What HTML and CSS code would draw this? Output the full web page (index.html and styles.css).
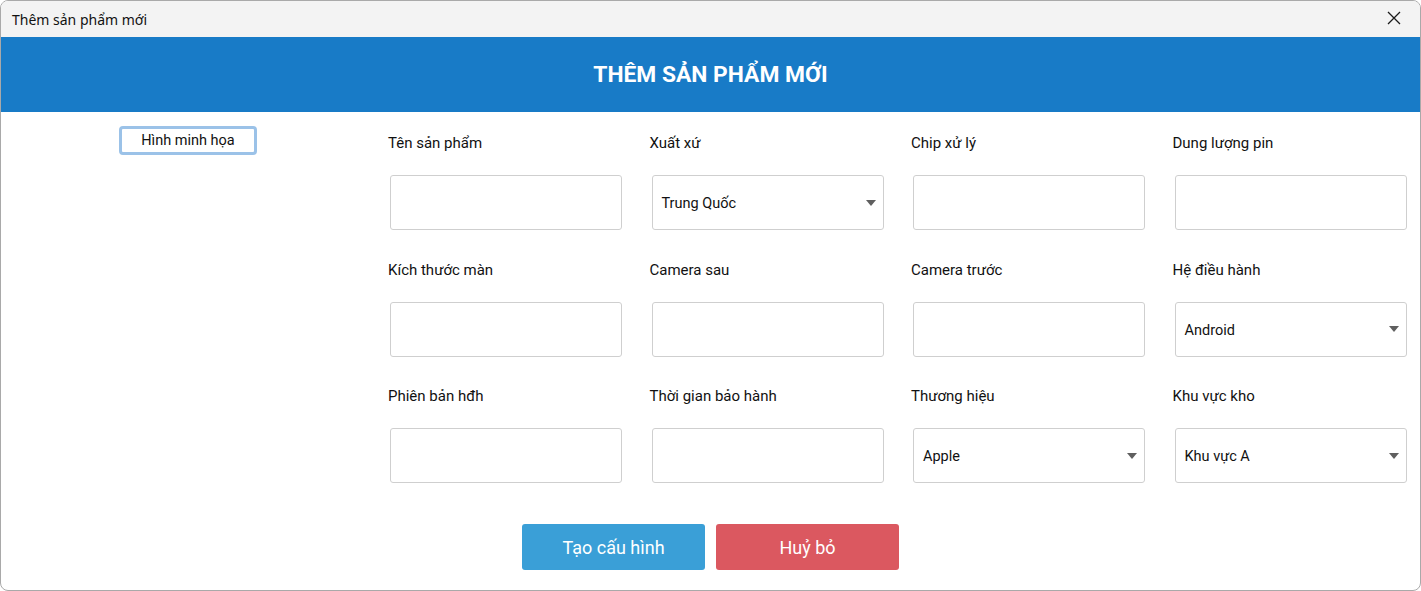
FILE: index.html
```html
<!DOCTYPE html>
<html lang="vi">
<head>
<meta charset="utf-8">
<title>Thêm sản phẩm mới</title>
<link rel="stylesheet" href="styles.css">
</head>
<body>
<div class="window">
  <div class="titlebar">
    <span class="titlebar-text">Thêm sản phẩm mới</span>
    <span class="close" aria-label="Đóng">
      <svg width="14" height="14" viewBox="0 0 14 14"><path d="M1 1 L13 13 M13 1 L1 13" stroke="#1a1a1a" stroke-width="1.3" fill="none"/></svg>
    </span>
  </div>
  <div class="banner">THÊM SẢN PHẨM MỚI</div>
  <div class="main">
    <div class="upper">
      <div class="side">
        <button class="pic-btn">Hình minh họa</button>
      </div>
      <div class="form">
        <div class="field"><div class="label">Tên sản phẩm</div><div class="input"></div></div>
        <div class="field"><div class="label">Xuất xứ</div><div class="input select"><span>Trung Quốc</span><i class="caret"></i></div></div>
        <div class="field"><div class="label">Chip xử lý</div><div class="input"></div></div>
        <div class="field"><div class="label">Dung lượng pin</div><div class="input"></div></div>

        <div class="field"><div class="label">Kích thước màn</div><div class="input"></div></div>
        <div class="field"><div class="label">Camera sau</div><div class="input"></div></div>
        <div class="field"><div class="label">Camera trước</div><div class="input"></div></div>
        <div class="field"><div class="label">Hệ điều hành</div><div class="input select"><span>Android</span><i class="caret"></i></div></div>

        <div class="field"><div class="label">Phiên bản hđh</div><div class="input"></div></div>
        <div class="field"><div class="label">Thời gian bảo hành</div><div class="input"></div></div>
        <div class="field"><div class="label">Thương hiệu</div><div class="input select"><span>Apple</span><i class="caret"></i></div></div>
        <div class="field"><div class="label">Khu vực kho</div><div class="input select"><span>Khu vực A</span><i class="caret"></i></div></div>
      </div>
    </div>
    <div class="actions">
      <button class="btn btn-primary">Tạo cấu hình</button>
      <button class="btn btn-danger">Huỷ bỏ</button>
    </div>
  </div>
</div>
</body>
</html>
```
FILE: styles.css
```css
* { box-sizing: border-box; }
html, body {
  margin: 0;
  padding: 0;
  background: #ffffff;
}
body {
  width: 1421px;
  height: 591px;
  overflow: hidden;
  font-family: Roboto, "Liberation Sans", Arial, sans-serif;
  color: #111;
}
.window {
  width: 1421px;
  height: 591px;
  border: 1px solid #a9a9a9;
  border-radius: 8px;
  overflow: hidden;
  display: flex;
  flex-direction: column;
  background: #fff;
}
.titlebar {
  height: 36px;
  background: #f3f3f3;
  display: flex;
  align-items: center;
  justify-content: space-between;
  padding: 0 19px 0 11px;
  flex-shrink: 0;
}
.titlebar-text {
  font-family: "Noto Sans", "Liberation Sans", sans-serif;
  font-size: 14px;
  color: #111;
  margin-top: 1px;
}
.close {
  display: flex;
  width: 14px;
  height: 14px;
  margin-top: -2px;
}
.banner {
  height: 75px;
  background: #187bc7;
  color: #fff;
  display: flex;
  align-items: center;
  justify-content: center;
  font-family: Roboto, "Liberation Sans", sans-serif;
  font-weight: 700;
  font-size: 22.8px;
  flex-shrink: 0;
}
.main {
  flex: 1;
  display: flex;
  flex-direction: column;
}
.upper {
  display: flex;
}
.side {
  width: 374px;
  flex-shrink: 0;
  display: flex;
  justify-content: flex-start;
  padding-top: 14px;
  padding-left: 118px;
}
.pic-btn {
  width: 138px;
  height: 29px;
  flex-shrink: 0;
  border: 3px solid #9bc2e8;
  border-radius: 4px;
  background: #fff;
  font-family: Roboto, "Liberation Sans", sans-serif;
  font-size: 14.5px;
  color: #111;
  padding: 0;
  align-self: flex-start;
}
.form {
  display: grid;
  grid-template-columns: 261.5px 261.5px 261.5px 236px;
  row-gap: 29.5px;
  padding-top: 21px;
  padding-left: 13px;
}
.field {
  display: flex;
  flex-direction: column;
}
.label {
  height: 20px;
  line-height: 20px;
  font-size: 15px;
  color: #111;
  margin-bottom: 22px;
}
.input {
  margin-left: 2px;
  width: 232px;
  height: 55px;
  border: 1px solid #cfcfcf;
  border-radius: 3px;
  background: #fff;
}
.select {
  display: flex;
  align-items: center;
  justify-content: space-between;
  padding: 0 7px 0 9px;
  font-size: 14.5px;
  color: #111;
}
.select span {
  margin-top: 2px;
}
.caret {
  width: 0;
  height: 0;
  border-left: 5.5px solid transparent;
  border-right: 5.5px solid transparent;
  border-top: 6px solid #5f5f5f;
}
.actions {
  display: flex;
  justify-content: center;
  gap: 11px;
  margin-top: 41px;
}
.btn {
  width: 183px;
  height: 46px;
  border: none;
  border-radius: 3px;
  color: #fff;
  font-family: Roboto, "Liberation Sans", sans-serif;
  font-size: 18px;
  padding: 0;
}
.btn-primary { background: #3a9fd7; }
.btn-danger { background: #db5860; }
```
